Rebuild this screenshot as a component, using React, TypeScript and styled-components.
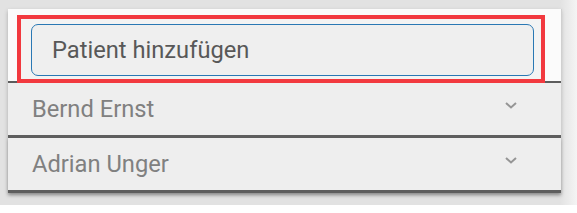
import React from 'react';
import styled, { createGlobalStyle } from 'styled-components';

const GlobalStyle = createGlobalStyle`
  html, body {
    margin: 0;
    padding: 0;
    background: #ffffff;
    font-family: Roboto, "Noto Sans", Arial, sans-serif;
  }
`;

const Frame = styled.div`
  width: 577px;
  height: 205px;
  box-sizing: border-box;
  padding: 9px 16px 0 8px;
  background: linear-gradient(to right, #e2e2e2 0, #e2e2e2 97%, #f4f4f4 100%);
`;

const Panel = styled.div`
  width: 553px;
  background: #eeeeee;
  box-shadow: 1px 0 0 #d0d0d0, 0 2px 4px rgba(0, 0, 0, 0.25);
`;

const TopSection = styled.div`
  background: #fbfbfb;
  padding: 6px 16px 0 9px;
  border-bottom: 2px solid #5c5c5c;
  display: flex;
`;

const Highlight = styled.div`
  flex: 1;
  border: 4px solid #f2393f;
  padding: 5px 7px 3px 10px;
  background: #f3f3f3;
  margin-bottom: -2px;
  position: relative;
  z-index: 1;
`;

const Input = styled.input`
  display: block;
  width: 100%;
  box-sizing: border-box;
  height: 52px;
  border: 1.5px solid #2a78b4;
  border-radius: 7px;
  background: #efefef;
  padding: 0 20px;
  font-family: Roboto, "Noto Sans", Arial, sans-serif;
  font-size: 23.7px;
  color: #585858;
  outline: none;

  &::placeholder {
    color: #585858;
  }
`;

const Row = styled.div<{ last?: boolean }>`
  height: 52px;
  display: flex;
  align-items: center;
  justify-content: space-between;
  padding: 0 43px 0 24px;
  background: #eeeeee;
  border-bottom: 3px solid #5e5e5e;
  font-size: 23.7px;
  color: #808080;
  ${p => p.last ? 'box-shadow: 0 2px 3px rgba(0, 0, 0, 0.2);' : ''}
`;

const Chevron = styled.svg`
  width: 14px;
  height: 9px;
  margin-top: -8px;
`;

const ChevronIcon = () => (
  <Chevron viewBox="0 0 14 9">
    <path d="M2 2 L7 6.5 L12 2" fill="none" stroke="#959595" strokeWidth="2" />
  </Chevron>
);

const patients = ['Bernd Ernst', 'Adrian Unger'];

const App: React.FC = () => {
  return (
    <>
      <GlobalStyle />
      <Frame>
        <Panel>
          <TopSection>
            <Highlight>
              <Input placeholder="Patient hinzufügen" />
            </Highlight>
          </TopSection>
          {patients.map((name, i) => (
            <Row key={name} last={i === patients.length - 1}>
              <span>{name}</span>
              <ChevronIcon />
            </Row>
          ))}
        </Panel>
      </Frame>
    </>
  );
};

export default App;
